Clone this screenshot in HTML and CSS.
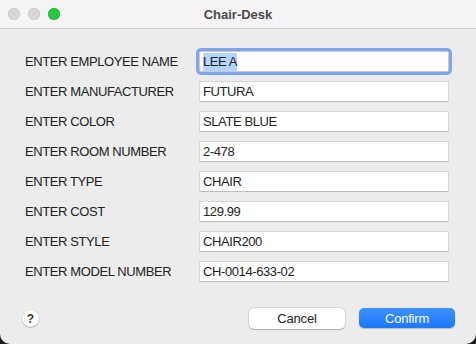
FILE: index.html
```html
<!DOCTYPE html>
<html lang="en">
<head>
    <meta charset="UTF-8">
    <meta name="viewport" content="width=device-width, initial-scale=1.0">
    <title>Chair-Desk</title>
    <link rel="stylesheet" href="styles.css">
</head>
<body>
    <div class="window">
        <div class="titlebar">
            <div class="lights">
                <span class="light"></span>
                <span class="light"></span>
                <span class="light green"></span>
            </div>
            <div class="title">Chair-Desk</div>
        </div>

        <div class="content">
            <div class="form">
                <label>ENTER EMPLOYEE NAME</label>
                <div class="field focused"><span class="sel">LEE A</span></div>

                <label>ENTER MANUFACTURER</label>
                <div class="field">FUTURA</div>

                <label>ENTER COLOR</label>
                <div class="field">SLATE BLUE</div>

                <label>ENTER ROOM NUMBER</label>
                <div class="field">2-478</div>

                <label>ENTER TYPE</label>
                <div class="field">CHAIR</div>

                <label>ENTER COST</label>
                <div class="field">129.99</div>

                <label>ENTER STYLE</label>
                <div class="field">CHAIR200</div>

                <label>ENTER MODEL NUMBER</label>
                <div class="field">CH-0014-633-02</div>
            </div>

            <div class="actions">
                <button class="help">?</button>
                <div class="buttons">
                    <button class="btn">Cancel</button>
                    <button class="btn primary">Confirm</button>
                </div>
            </div>
        </div>
    </div>
</body>
</html>
```

FILE: styles.css
```css
html, body {
    margin: 0;
    height: 100%;
}

body {
    font-family: "Liberation Sans", Arial, sans-serif;
    font-size: 13px;
    letter-spacing: -0.4px;
    color: #222;
    background: linear-gradient(#f4f4f4 50%, #1c1c1c 50%);
}

.window {
    height: 100%;
    display: flex;
    flex-direction: column;
    background: #ececec;
    border-radius: 10px;
    overflow: hidden;
}

.titlebar {
    height: 28px;
    flex: none;
    display: flex;
    align-items: center;
    justify-content: center;
    position: relative;
    background: #f5f3f5;
    border-bottom: 1px solid #cfcfcf;
}

.lights {
    position: absolute;
    left: 8px;
    top: 8px;
    display: flex;
    gap: 8px;
}

.light {
    width: 12px;
    height: 12px;
    border-radius: 50%;
    background: #d9d7da;
    box-shadow: inset 0 0 0 0.5px #c4c2c5;
}

.light.green {
    background: #28c840;
    box-shadow: inset 0 0 0 0.5px #1fae34;
}

.title {
    font-weight: bold;
    color: #4b4b4b;
    padding-top: 1px;
    letter-spacing: 0;
}

.content {
    flex: 1;
    display: flex;
    flex-direction: column;
    padding: 22px 21px 0 25px;
}

.form {
    display: grid;
    grid-template-columns: 174px 250px;
    row-gap: 9px;
    align-items: center;
}

.field {
    height: 21px;
    box-sizing: border-box;
    background: #fff;
    border: 1px solid #d6d6d6;
    border-bottom-color: #bdbdbd;
    padding: 0 3px;
    line-height: 19px;
    white-space: nowrap;
}

.field.focused {
    border-color: #c9c9c9;
    border-radius: 2px;
    box-shadow: 0 0 0 3px #7ea6ee;
}

.sel {
    background: #b4d4fb;
    padding: 1px 0 2px;
}

.actions {
    margin-top: 26px;
    display: flex;
    align-items: center;
    justify-content: space-between;
}

.help {
    width: 17px;
    height: 17px;
    padding: 0;
    margin-left: -3px;
    border: none;
    border-radius: 50%;
    background: #fff;
    box-shadow: 0 0 0 0.5px rgba(0, 0, 0, 0.15), 0 1px 1px rgba(0, 0, 0, 0.2);
    font-family: "Liberation Sans", Arial, sans-serif;
    font-size: 12px;
    font-weight: bold;
    color: #333;
}

.buttons {
    display: flex;
    gap: 14px;
}

.btn {
    width: 96px;
    height: 21px;
    padding: 0;
    border: none;
    border-radius: 5px;
    background: #fff;
    box-shadow: 0 0 0 0.5px rgba(0, 0, 0, 0.18), 0 1px 1px rgba(0, 0, 0, 0.18);
    font-family: "Liberation Sans", Arial, sans-serif;
    font-size: 13px;
    letter-spacing: -0.2px;
    color: #222;
}

.btn.primary {
    height: 20px;
    color: #fff;
    background: linear-gradient(#3b91ff, #1c77fb);
    box-shadow: 0 0.5px 1px rgba(0, 0, 0, 0.2);
}
```
